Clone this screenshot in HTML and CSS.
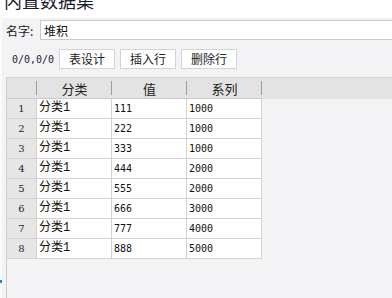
FILE: index.html
```html
<!DOCTYPE html>
<html lang="zh-CN">
<head>
    <meta charset="UTF-8">
    <title>内置数据集</title>
    <link rel="stylesheet" href="styles.css">
</head>
<body>
    <div class="edge"><div class="edge-mark"></div></div>
    <div class="main">
        <div class="title-bar"><div class="title">内置数据集</div></div>

        <div class="name-row">
            <label class="name-label" for="name">名字:</label>
            <input class="name-input" type="text" id="name" value="堆积">
        </div>

        <div class="toolbar">
            <span class="counter">0/0,0/0</span>
            <button class="btn">表设计</button>
            <button class="btn">插入行</button>
            <button class="btn">删除行</button>
        </div>

        <div class="grid">
            <div class="grid-head">
                <div class="hcell hcell-idx"></div>
                <div class="hcell">分类</div>
                <div class="hcell">值</div>
                <div class="hcell">系列</div>
            </div>
            <div class="grid-row"><div class="cell cell-idx">1</div><div class="cell">分类1</div><div class="cell num">111</div><div class="cell num">1000</div></div>
            <div class="grid-row"><div class="cell cell-idx">2</div><div class="cell">分类1</div><div class="cell num">222</div><div class="cell num">1000</div></div>
            <div class="grid-row"><div class="cell cell-idx">3</div><div class="cell">分类1</div><div class="cell num">333</div><div class="cell num">1000</div></div>
            <div class="grid-row"><div class="cell cell-idx">4</div><div class="cell">分类1</div><div class="cell num">444</div><div class="cell num">2000</div></div>
            <div class="grid-row"><div class="cell cell-idx">5</div><div class="cell">分类1</div><div class="cell num">555</div><div class="cell num">2000</div></div>
            <div class="grid-row"><div class="cell cell-idx">6</div><div class="cell">分类1</div><div class="cell num">666</div><div class="cell num">3000</div></div>
            <div class="grid-row"><div class="cell cell-idx">7</div><div class="cell">分类1</div><div class="cell num">777</div><div class="cell num">4000</div></div>
            <div class="grid-row"><div class="cell cell-idx">8</div><div class="cell">分类1</div><div class="cell num">888</div><div class="cell num">5000</div></div>
        </div>
    </div>
</body>
</html>
```

FILE: styles.css
```css
body {
    font-family: "Noto Sans CJK SC", "Liberation Sans", sans-serif;
    background-color: #f3f3f5;
    margin: 0;
    padding: 0;
    display: flex;
    height: 100vh;
    overflow: hidden;
    color: #222;
}

.edge {
    width: 2px;
    background-color: #fbfbfb;
    flex-shrink: 0;
}

.edge-mark {
    margin-top: 280px;
    height: 3px;
    background-color: #2f7de1;
}

.main {
    flex: 1;
    display: flex;
    flex-direction: column;
    min-width: 0;
}

.title-bar {
    height: 18px;
    background-color: white;
    overflow: hidden;
}

.title {
    margin-top: -9px;
    padding-left: 2px;
    font-size: 18px;
    line-height: 18px;
    color: #1b1b30;
}

.name-row {
    display: flex;
    align-items: center;
    margin-top: 2px;
    height: 20px;
}

.name-label {
    width: 38px;
    padding-left: 4px;
    box-sizing: border-box;
    font-size: 12px;
    color: #222;
}

.name-input {
    flex: 1;
    height: 20px;
    box-sizing: border-box;
    margin: 0;
    padding: 0 3px;
    border: 1px solid #c9c9c9;
    border-right: none;
    background-color: white;
    font-family: "Noto Sans CJK SC", sans-serif;
    font-size: 12px;
    color: #111;
    outline: none;
}

.toolbar {
    display: flex;
    align-items: center;
    gap: 5px;
    margin-top: 9px;
    padding-left: 10px;
    height: 20px;
}

.counter {
    font-family: "DejaVu Sans Mono", monospace;
    font-size: 10px;
    color: #1c1c3c;
    margin-right: 1px;
    width: 41px;
}

.btn {
    width: 56px;
    height: 20px;
    margin: 0;
    padding: 0;
    background-color: white;
    border: 1px solid #d3d3d3;
    border-radius: 0;
    font-family: "Noto Sans CJK SC", sans-serif;
    font-size: 12px;
    line-height: 18px;
    color: #222;
}

.grid {
    flex: 1;
    margin-top: 8px;
    margin-left: 4px;
    border-left: 1px solid #cfcfcf;
}

.grid-head {
    display: flex;
    height: 20px;
    background-color: #e3e3e3;
    border-top: 1px solid #d4d4d4;
    padding-bottom: 1px;
}

.hcell {
    position: relative;
    width: 75px;
    height: 21px;
    box-sizing: border-box;
    border-bottom: 1px solid #c9c9c9;
    text-align: center;
    font-size: 13px;
    line-height: 21px;
    color: #222;
}

.hcell-idx {
    width: 30px;
}

.hcell::after {
    content: "";
    position: absolute;
    right: 0;
    top: 3px;
    bottom: 3px;
    width: 1px;
    background-color: #9c9c9c;
}

.grid-row {
    display: flex;
    height: 20px;
}

.cell {
    width: 75px;
    height: 20px;
    box-sizing: border-box;
    padding-left: 2px;
    border-right: 1px solid #d2d2d2;
    border-bottom: 1px solid #d2d2d2;
    background-color: white;
    font-family: "Liberation Mono", "Noto Sans CJK SC", monospace;
    font-size: 12px;
    line-height: 19px;
    color: #111;
    white-space: nowrap;
}

.num {
    font-family: "DejaVu Sans Mono", monospace;
    font-size: 10px;
}

.cell-idx {
    width: 30px;
    padding-left: 0;
    text-align: center;
    background-color: #e6e6e6;
    font-family: "DejaVu Serif", serif;
    font-size: 10px;
    color: #1c1c3c;
}
```
